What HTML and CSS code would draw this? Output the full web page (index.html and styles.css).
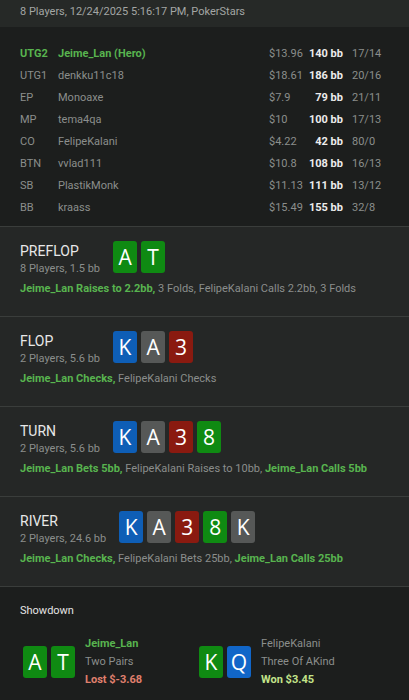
FILE: index.html
```html
<!DOCTYPE html>
<html>
<head>
<meta charset="utf-8">
<link rel="stylesheet" href="styles.css">
</head>
<body>
<div class="header">8 Players, 12/24/2025 5:16:17 PM, PokerStars</div>

<div class="players">
  <div class="row hero"><span>UTG2</span><span>Jeime_Lan (Hero)</span><span class="money">$13.96</span><span class="bb">140 bb</span><span class="ratio">17/14</span></div>
  <div class="row"><span>UTG1</span><span>denkku11c18</span><span class="money">$18.61</span><span class="bb">186 bb</span><span class="ratio">20/16</span></div>
  <div class="row"><span>EP</span><span>Monoaxe</span><span class="money">$7.9</span><span class="bb">79 bb</span><span class="ratio">21/11</span></div>
  <div class="row"><span>MP</span><span>tema4qa</span><span class="money">$10</span><span class="bb">100 bb</span><span class="ratio">17/13</span></div>
  <div class="row"><span>CO</span><span>FelipeKalani</span><span class="money">$4.22</span><span class="bb">42 bb</span><span class="ratio">80/0</span></div>
  <div class="row"><span>BTN</span><span>vvlad111</span><span class="money">$10.8</span><span class="bb">108 bb</span><span class="ratio">16/13</span></div>
  <div class="row"><span>SB</span><span>PlastikMonk</span><span class="money">$11.13</span><span class="bb">111 bb</span><span class="ratio">13/12</span></div>
  <div class="row"><span>BB</span><span>kraass</span><span class="money">$15.49</span><span class="bb">155 bb</span><span class="ratio">32/8</span></div>
</div>

<div class="street">
  <div class="street-head">
    <div class="street-title">
      <div class="name">PREFLOP</div>
      <div class="sub">8 Players, 1.5 bb</div>
    </div>
    <div class="cards"><span class="card g">A</span><span class="card g">T</span></div>
  </div>
  <div class="actions"><b>Jeime_Lan Raises to 2.2bb,</b> 3 Folds, FelipeKalani Calls 2.2bb, 3 Folds</div>
</div>

<div class="street">
  <div class="street-head">
    <div class="street-title">
      <div class="name">FLOP</div>
      <div class="sub">2 Players, 5.6 bb</div>
    </div>
    <div class="cards"><span class="card b">K</span><span class="card s">A</span><span class="card r">3</span></div>
  </div>
  <div class="actions"><b>Jeime_Lan Checks,</b> FelipeKalani Checks</div>
</div>

<div class="street">
  <div class="street-head">
    <div class="street-title">
      <div class="name">TURN</div>
      <div class="sub">2 Players, 5.6 bb</div>
    </div>
    <div class="cards"><span class="card b">K</span><span class="card s">A</span><span class="card r">3</span><span class="card g">8</span></div>
  </div>
  <div class="actions"><b>Jeime_Lan Bets 5bb,</b> FelipeKalani Raises to 10bb, <b>Jeime_Lan Calls 5bb</b></div>
</div>

<div class="street">
  <div class="street-head">
    <div class="street-title">
      <div class="name">RIVER</div>
      <div class="sub">2 Players, 24.6 bb</div>
    </div>
    <div class="cards"><span class="card b">K</span><span class="card s">A</span><span class="card r">3</span><span class="card g">8</span><span class="card s">K</span></div>
  </div>
  <div class="actions"><b>Jeime_Lan Checks,</b> FelipeKalani Bets 25bb, <b>Jeime_Lan Calls 25bb</b></div>
</div>

<div class="showdown">
  <div class="sd-title">Showdown</div>
  <div class="sd-hands">
    <div class="sd-hand">
      <div class="cards"><span class="card g">A</span><span class="card g">T</span></div>
      <div class="sd-info">
        <div class="sd-name hero-name">Jeime_Lan</div>
        <div class="sd-rank">Two Pairs</div>
        <div class="sd-result lost">Lost $-3.68</div>
      </div>
    </div>
    <div class="sd-hand">
      <div class="cards"><span class="card g">K</span><span class="card qb">Q</span></div>
      <div class="sd-info">
        <div class="sd-name">FelipeKalani</div>
        <div class="sd-rank">Three Of AKind</div>
        <div class="sd-result won">Won $3.45</div>
      </div>
    </div>
  </div>
</div>
</body>
</html>
```

FILE: styles.css
```css
* { box-sizing: border-box; }
html, body { margin: 0; padding: 0; }
body {
  background: #1c1e1d;
  font-family: Roboto, "Noto Sans", sans-serif;
  font-size: 11px;
  color: #8b8e8c;
  width: 409px;
  height: 700px;
  overflow: hidden;
}
.header {
  background: #262927;
  height: 27px;
  padding: 4px 20px 0;
  color: #a3a6a4;
  line-height: 16px;
}
.players {
  padding: 16px 0 7px 20px;
  border-bottom: 1px solid #3a3d3b;
}
.row {
  display: grid;
  grid-template-columns: 38px 211px 36px 38px auto;
  height: 22px;
  line-height: 22px;
  white-space: nowrap;
}
.row .bb { text-align: right; color: #ececec; font-weight: 700; }
.row .ratio { padding-left: 9px; }
.row.hero span:nth-child(1), .row.hero span:nth-child(2) { color: #58b44f; font-weight: 700; }

.street {
  background: #252726;
  height: 90px;
  padding: 14px 20px 0;
  border-bottom: 1px solid #3a3d3b;
}
.street-head { display: flex; gap: 13px; align-items: flex-start; }
.street-title .name { color: #e8e8e8; font-size: 14px; line-height: 18px; margin-top: 1px; }
.street-title .sub { line-height: 15px; margin-top: 1px; }
.cards { display: flex; gap: 4px; }
.card {
  width: 24px; height: 32px;
  border-radius: 3px;
  color: #fff;
  font-family: "Open Sans", "Noto Sans", sans-serif;
  font-size: 21px;
  line-height: 32px;
  text-align: center;
}
.card.g { background: #0f8a12; }
.card.b { background: #0e5eb6; }
.card.s { background: #565857; }
.card.r { background: #8a1a10; }
.card.qb { background: #1166c8; }
.actions { margin-top: 5px; line-height: 16px; white-space: nowrap; }
.actions b { color: #58b44f; }

.showdown { padding: 16px 23px 0 20px; }
.sd-title { color: #e4e4e4; line-height: 16px; }
.sd-hands { display: flex; margin-top: 16px; padding-left: 3px; }
.sd-hand { display: flex; align-items: center; gap: 10px; width: 176px; }
.sd-info { line-height: 18px; }
.hero-name { color: #58b44f; font-weight: 700; }
.sd-result { font-weight: 700; }
.lost { color: #e0806e; }
.won { color: #c3e38a; }
```
